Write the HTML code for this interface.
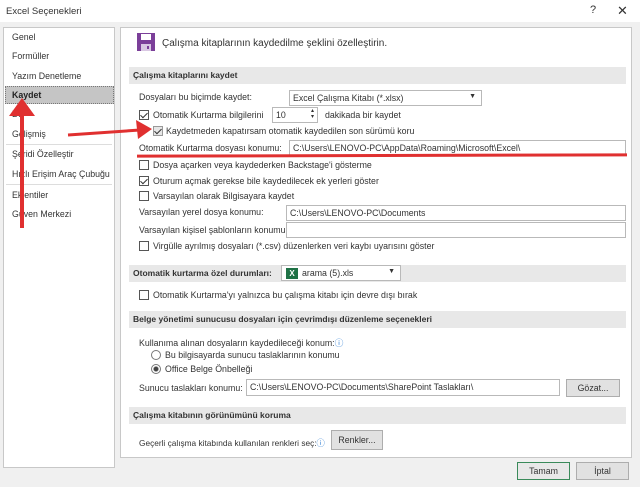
<!DOCTYPE html><html><head><style>
*{box-sizing:border-box}body{margin:0;width:640px;height:487px;background:#f0f0f0;font-family:"Liberation Sans",sans-serif;font-size:8.8px;color:#333;position:relative;overflow:hidden}
.a{position:absolute;white-space:nowrap}
.title{left:0;top:0;width:640px;height:22px;background:#fff}
.left{left:3px;top:27px;width:112px;height:441px;background:#fff;border:1px solid #c8c8c8}
.right{left:120px;top:27px;width:512px;height:431px;background:#fff;border:1px solid #c8c8c8}
.sec{left:129px;width:497px;height:17px;background:#e8e8e8;font-weight:bold;padding:3px 4px;font-size:8.5px}
.in{background:#fff;border:1px solid #b9b9b9;height:16px;padding:2px 3px;font-size:8.8px}
.cb{width:10px;height:10px;border:1px solid #555;background:#fff}
.ck::after{content:"";position:absolute;left:2px;top:0px;width:3px;height:6px;border:solid #333;border-width:0 1.3px 1.3px 0;transform:rotate(45deg)}
.btn{background:#e1e1e1;border:1px solid #adadad;text-align:center;padding-top:3px;height:18px}
</style></head><body>
<div class="a title"></div>
<div class="a" style="left:6px;top:6px;font-size:9.5px">Excel Seçenekleri</div>
<div class="a" style="left:590px;top:4px;font-size:11px">?</div>
<div class="a" style="left:617px;top:3px;font-size:13px">✕</div>
<div class="a left"></div>
<div class="a" style="left:12px;top:32px">Genel</div>
<div class="a" style="left:12px;top:51px">Formüller</div>
<div class="a" style="left:12px;top:71px">Yazım Denetleme</div>
<div class="a" style="left:5px;top:86px;width:109px;height:18px;background:#c5c5c5;border:1px dotted #777"></div>
<div class="a" style="left:12px;top:90px;font-weight:bold;color:#222">Kaydet</div>
<div class="a" style="left:12px;top:109px">Dil</div>
<div class="a" style="left:12px;top:129px">Gelişmiş</div>
<div class="a" style="left:6px;top:144px;width:106px;height:1px;background:#ddd"></div>
<div class="a" style="left:12px;top:149px">Şeridi Özelleştir</div>
<div class="a" style="left:12px;top:169px">Hızlı Erişim Araç Çubuğu</div>
<div class="a" style="left:6px;top:184px;width:106px;height:1px;background:#ddd"></div>
<div class="a" style="left:12px;top:190px">Eklentiler</div>
<div class="a" style="left:12px;top:209px">Güven Merkezi</div>
<div class="a right"></div>
<svg class="a" style="left:137px;top:33px" width="18" height="18"><rect x="0" y="0" width="18" height="18" fill="#7b3f99"/><rect x="4" y="1" width="10" height="6" fill="#fff"/><rect x="4" y="11" width="10" height="7" fill="#d9c8e3"/><rect x="10" y="13" width="2" height="3" fill="#7b3f99"/></svg>
<div class="a" style="left:162px;top:38px;font-size:10px">Çalışma kitaplarının kaydedilme şeklini özelleştirin.</div>
<div class="a sec" style="top:67px">Çalışma kitaplarını kaydet</div>
<div class="a" style="left:139px;top:92px">Dosyaları bu biçimde kaydet:</div>
<div class="a in" style="left:289px;top:90px;width:193px">Excel Çalışma Kitabı (*.xlsx)<span style="position:absolute;right:5px;top:2px;font-size:7px">▼</span></div>
<div class="a cb ck" style="left:139px;top:110px"></div>
<div class="a" style="left:153px;top:110px">Otomatik Kurtarma bilgilerini</div>
<div class="a in" style="left:272px;top:107px;width:46px">10<span style="position:absolute;right:3px;top:0;font-size:6px;line-height:6px">▴<br>▾</span></div>
<div class="a" style="left:325px;top:110px">dakikada bir kaydet</div>
<div class="a cb ck" style="left:153px;top:126px;border-color:#999;background:#e6e6e6"></div>
<div class="a" style="left:166px;top:126px">Kaydetmeden kapatırsam otomatik kaydedilen son sürümü koru</div>
<div class="a" style="left:139px;top:143px">Otomatik Kurtarma dosyası konumu:</div>
<div class="a in" style="left:289px;top:140px;width:337px">C:\Users\LENOVO-PC\AppData\Roaming\Microsoft\Excel\</div>
<div class="a" style="left:137px;top:154px;width:490px;height:3px;background:#e03030;transform:rotate(-0.15deg)"></div>
<div class="a cb" style="left:139px;top:160px"></div>
<div class="a" style="left:153px;top:160px">Dosya açarken veya kaydederken Backstage'i gösterme</div>
<div class="a cb ck" style="left:139px;top:176px"></div>
<div class="a" style="left:153px;top:176px">Oturum açmak gerekse bile kaydedilecek ek yerleri göster</div>
<div class="a cb" style="left:139px;top:191px"></div>
<div class="a" style="left:153px;top:191px">Varsayılan olarak Bilgisayara kaydet</div>
<div class="a" style="left:139px;top:207px">Varsayılan yerel dosya konumu:</div>
<div class="a in" style="left:286px;top:205px;width:340px">C:\Users\LENOVO-PC\Documents</div>
<div class="a" style="left:139px;top:225px">Varsayılan kişisel şablonların konumu:</div>
<div class="a in" style="left:286px;top:222px;width:340px"></div>
<div class="a cb" style="left:139px;top:241px"></div>
<div class="a" style="left:153px;top:241px">Virgülle ayrılmış dosyaları (*.csv) düzenlerken veri kaybı uyarısını göster</div>
<div class="a sec" style="top:265px;height:17px">Otomatik kurtarma özel durumları:</div>
<div class="a in" style="left:281px;top:265px;width:120px;padding-left:20px">arama (5).xls<span style="position:absolute;right:5px;top:2px;font-size:7px">▼</span></div>
<div class="a" style="left:286px;top:268px;width:12px;height:11px;background:#1e7145;color:#fff;font-size:8px;font-weight:bold;text-align:center;line-height:11px">X</div>
<div class="a cb" style="left:139px;top:290px"></div>
<div class="a" style="left:153px;top:290px">Otomatik Kurtarma'yı yalnızca bu çalışma kitabı için devre dışı bırak</div>
<div class="a sec" style="top:311px">Belge yönetimi sunucusu dosyaları için çevrimdışı düzenleme seçenekleri</div>
<div class="a" style="left:139px;top:336px">Kullanıma alınan dosyaların kaydedileceği konum:<span style="color:#2b7cd3">ⓘ</span></div>
<div class="a" style="left:151px;top:350px;width:10px;height:10px;border:1px solid #777;border-radius:50%"></div>
<div class="a" style="left:165px;top:350px">Bu bilgisayarda sunucu taslaklarının konumu</div>
<div class="a" style="left:151px;top:364px;width:10px;height:10px;border:1px solid #777;border-radius:50%;background:radial-gradient(#444 2px,#fff 3px)"></div>
<div class="a" style="left:165px;top:364px">Office Belge Önbelleği</div>
<div class="a" style="left:139px;top:383px">Sunucu taslakları konumu:</div>
<div class="a in" style="left:246px;top:379px;width:314px;height:17px">C:\Users\LENOVO-PC\Documents\SharePoint Taslakları\</div>
<div class="a btn" style="left:566px;top:379px;width:54px">Gözat...</div>
<div class="a sec" style="top:407px">Çalışma kitabının görünümünü koruma</div>
<div class="a" style="left:139px;top:437px;font-size:8.3px">Geçerli çalışma kitabında kullanılan renkleri seç:<span style="color:#2b7cd3">ⓘ</span></div>
<div class="a btn" style="left:331px;top:430px;width:52px;height:20px;padding-top:4px">Renkler...</div>
<div class="a btn" style="left:517px;top:462px;width:53px;border:1.5px solid #3a8a5a;background:#e8e8e8">Tamam</div>
<div class="a btn" style="left:576px;top:462px;width:53px">İptal</div>
<svg class="a" style="left:0;top:0" width="640" height="487">
<g fill="#e03030" stroke="#e03030">
<line x1="22" y1="228" x2="22" y2="112" stroke-width="4"/>
<polygon points="22,98 9,116 35,116" stroke="none"/>
<line x1="68" y1="135" x2="140" y2="130" stroke-width="3"/>
<polygon points="152,129 136,120 138,139" stroke="none"/>
</g></svg>
</body></html>
